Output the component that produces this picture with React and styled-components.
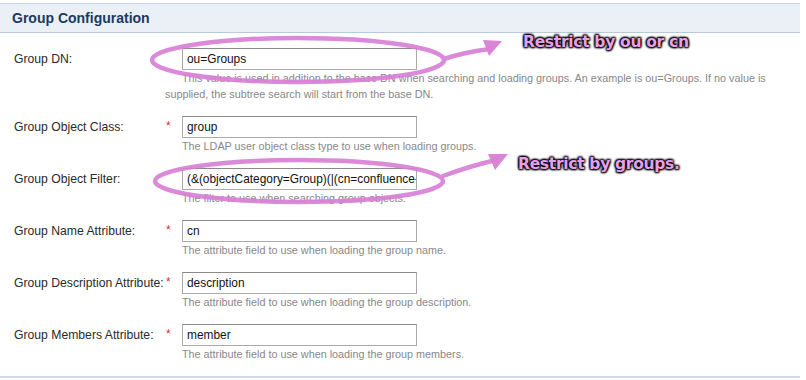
import React from 'react';
import styled, { createGlobalStyle } from 'styled-components';

const GlobalStyle = createGlobalStyle`
  body {
    margin: 0;
    background: #fff;
    font-family: "Liberation Sans", Arial, sans-serif;
  }
`;

const Page = styled.div`
  position: relative;
  width: 806px;
  height: 380px;
  overflow: hidden;
  padding-top: 3px;
  box-sizing: border-box;
`;

const Panel = styled.div`
  width: 800px;
  border-bottom: 2px solid #cfdbe9;
`;

const Header = styled.div`
  height: 28px;
  border-top: 1px solid #c9d5e3;
  border-bottom: 1px solid #b9c8da;
  background: #ebf0f7;
  display: flex;
  align-items: center;
  padding-left: 12px;
  font-size: 14px;
  font-weight: bold;
  color: #1c3a60;
`;

const Body = styled.div`
  padding: 15px 0 0 14px;
`;

const Row = styled.div`
  display: grid;
  grid-template-columns: 151px 17px 235px 1fr;
  padding-bottom: 14px;
`;

const Label = styled.div`
  font-size: 12.2px;
  color: #2a2a2a;
  line-height: 22px;
  white-space: nowrap;
`;

const Required = styled.span`
  color: #d03030;
  font-size: 12px;
  line-height: 16px;
  padding-left: 1px;
`;

const Input = styled.div`
  height: 22px;
  box-sizing: border-box;
  border: 1px solid #aaa;
  border-top-color: #8a8a8a;
  padding: 0 4px;
  font-size: 11.9px;
  line-height: 20px;
  color: #111;
  white-space: nowrap;
  overflow: hidden;
`;

const Description = styled.div`
  grid-column: 2 / 5;
  font-size: 10.8px;
  line-height: 16px;
  color: #888;
  text-indent: 17px;
  padding-right: 30px;
`;

const Overlay = styled.svg`
  position: absolute;
  left: 0;
  top: 0;
  pointer-events: none;
`;

const Note = styled.div`
  position: absolute;
  left: ${p => p.x}px;
  top: ${p => p.y}px;
  font-family: "DejaVu Sans", sans-serif;
  font-weight: bold;
  font-size: 15.5px;
  letter-spacing: -0.3px;
  color: #e6a0ea;
  text-shadow: 0 0 2px #000, 1px 1px 2px #000, -1px -1px 2px #000, 1px -1px 2px #000, -1px 1px 2px #000;
  white-space: nowrap;
`;

const fields = [
  {
    label: 'Group DN:',
    value: 'ou=Groups',
    desc: 'This value is used in addition to the base DN when searching and loading groups. An example is ou=Groups. If no value is supplied, the subtree search will start from the base DN.',
  },
  {
    label: 'Group Object Class:',
    required: true,
    value: 'group',
    desc: 'The LDAP user object class type to use when loading groups.',
  },
  {
    label: 'Group Object Filter:',
    value: '(&(objectCategory=Group)(|(cn=confluence-users)(cn=confluence-administrators)))',
    desc: 'The filter to use when searching group objects.',
  },
  {
    label: 'Group Name Attribute:',
    required: true,
    value: 'cn',
    desc: 'The attribute field to use when loading the group name.',
  },
  {
    label: 'Group Description Attribute:',
    required: true,
    value: 'description',
    desc: 'The attribute field to use when loading the group description.',
  },
  {
    label: 'Group Members Attribute:',
    required: true,
    value: 'member',
    desc: 'The attribute field to use when loading the group members.',
  },
];

const pink = '#d97fd6';

export default function App() {
  return (
    <Page>
      <GlobalStyle />
      <Panel>
        <Header>Group Configuration</Header>
        <Body>
          {fields.map(f => (
            <Row key={f.label}>
              <Label>{f.label}</Label>
              <div>{f.required && <Required>*</Required>}</div>
              <Input>{f.value}</Input>
              <div />
              <Description>{f.desc}</Description>
            </Row>
          ))}
        </Body>
      </Panel>

      {/* hand-drawn annotations */}
      <Overlay width="806" height="380" viewBox="0 0 806 380">
        <g fill="none" stroke={pink} strokeWidth="4.5" strokeLinecap="round" opacity="0.92">
          <ellipse cx="298" cy="60" rx="146" ry="22" />
          <path d="M444 59 Q 465 52 490 49" />
          <ellipse cx="299" cy="181" rx="144" ry="21" />
          <path d="M443 176 Q 470 166 496 160" />
        </g>
        <g fill={pink} opacity="0.95">
          <polygon points="483,40 502,41 489,56" />
          <polygon points="488,154 508,154 495,170" />
        </g>
      </Overlay>
      <Note x={523} y={33}>Restrict by ou or cn</Note>
      <Note x={518} y={155}>Restrict by groups.</Note>
    </Page>
  );
}
